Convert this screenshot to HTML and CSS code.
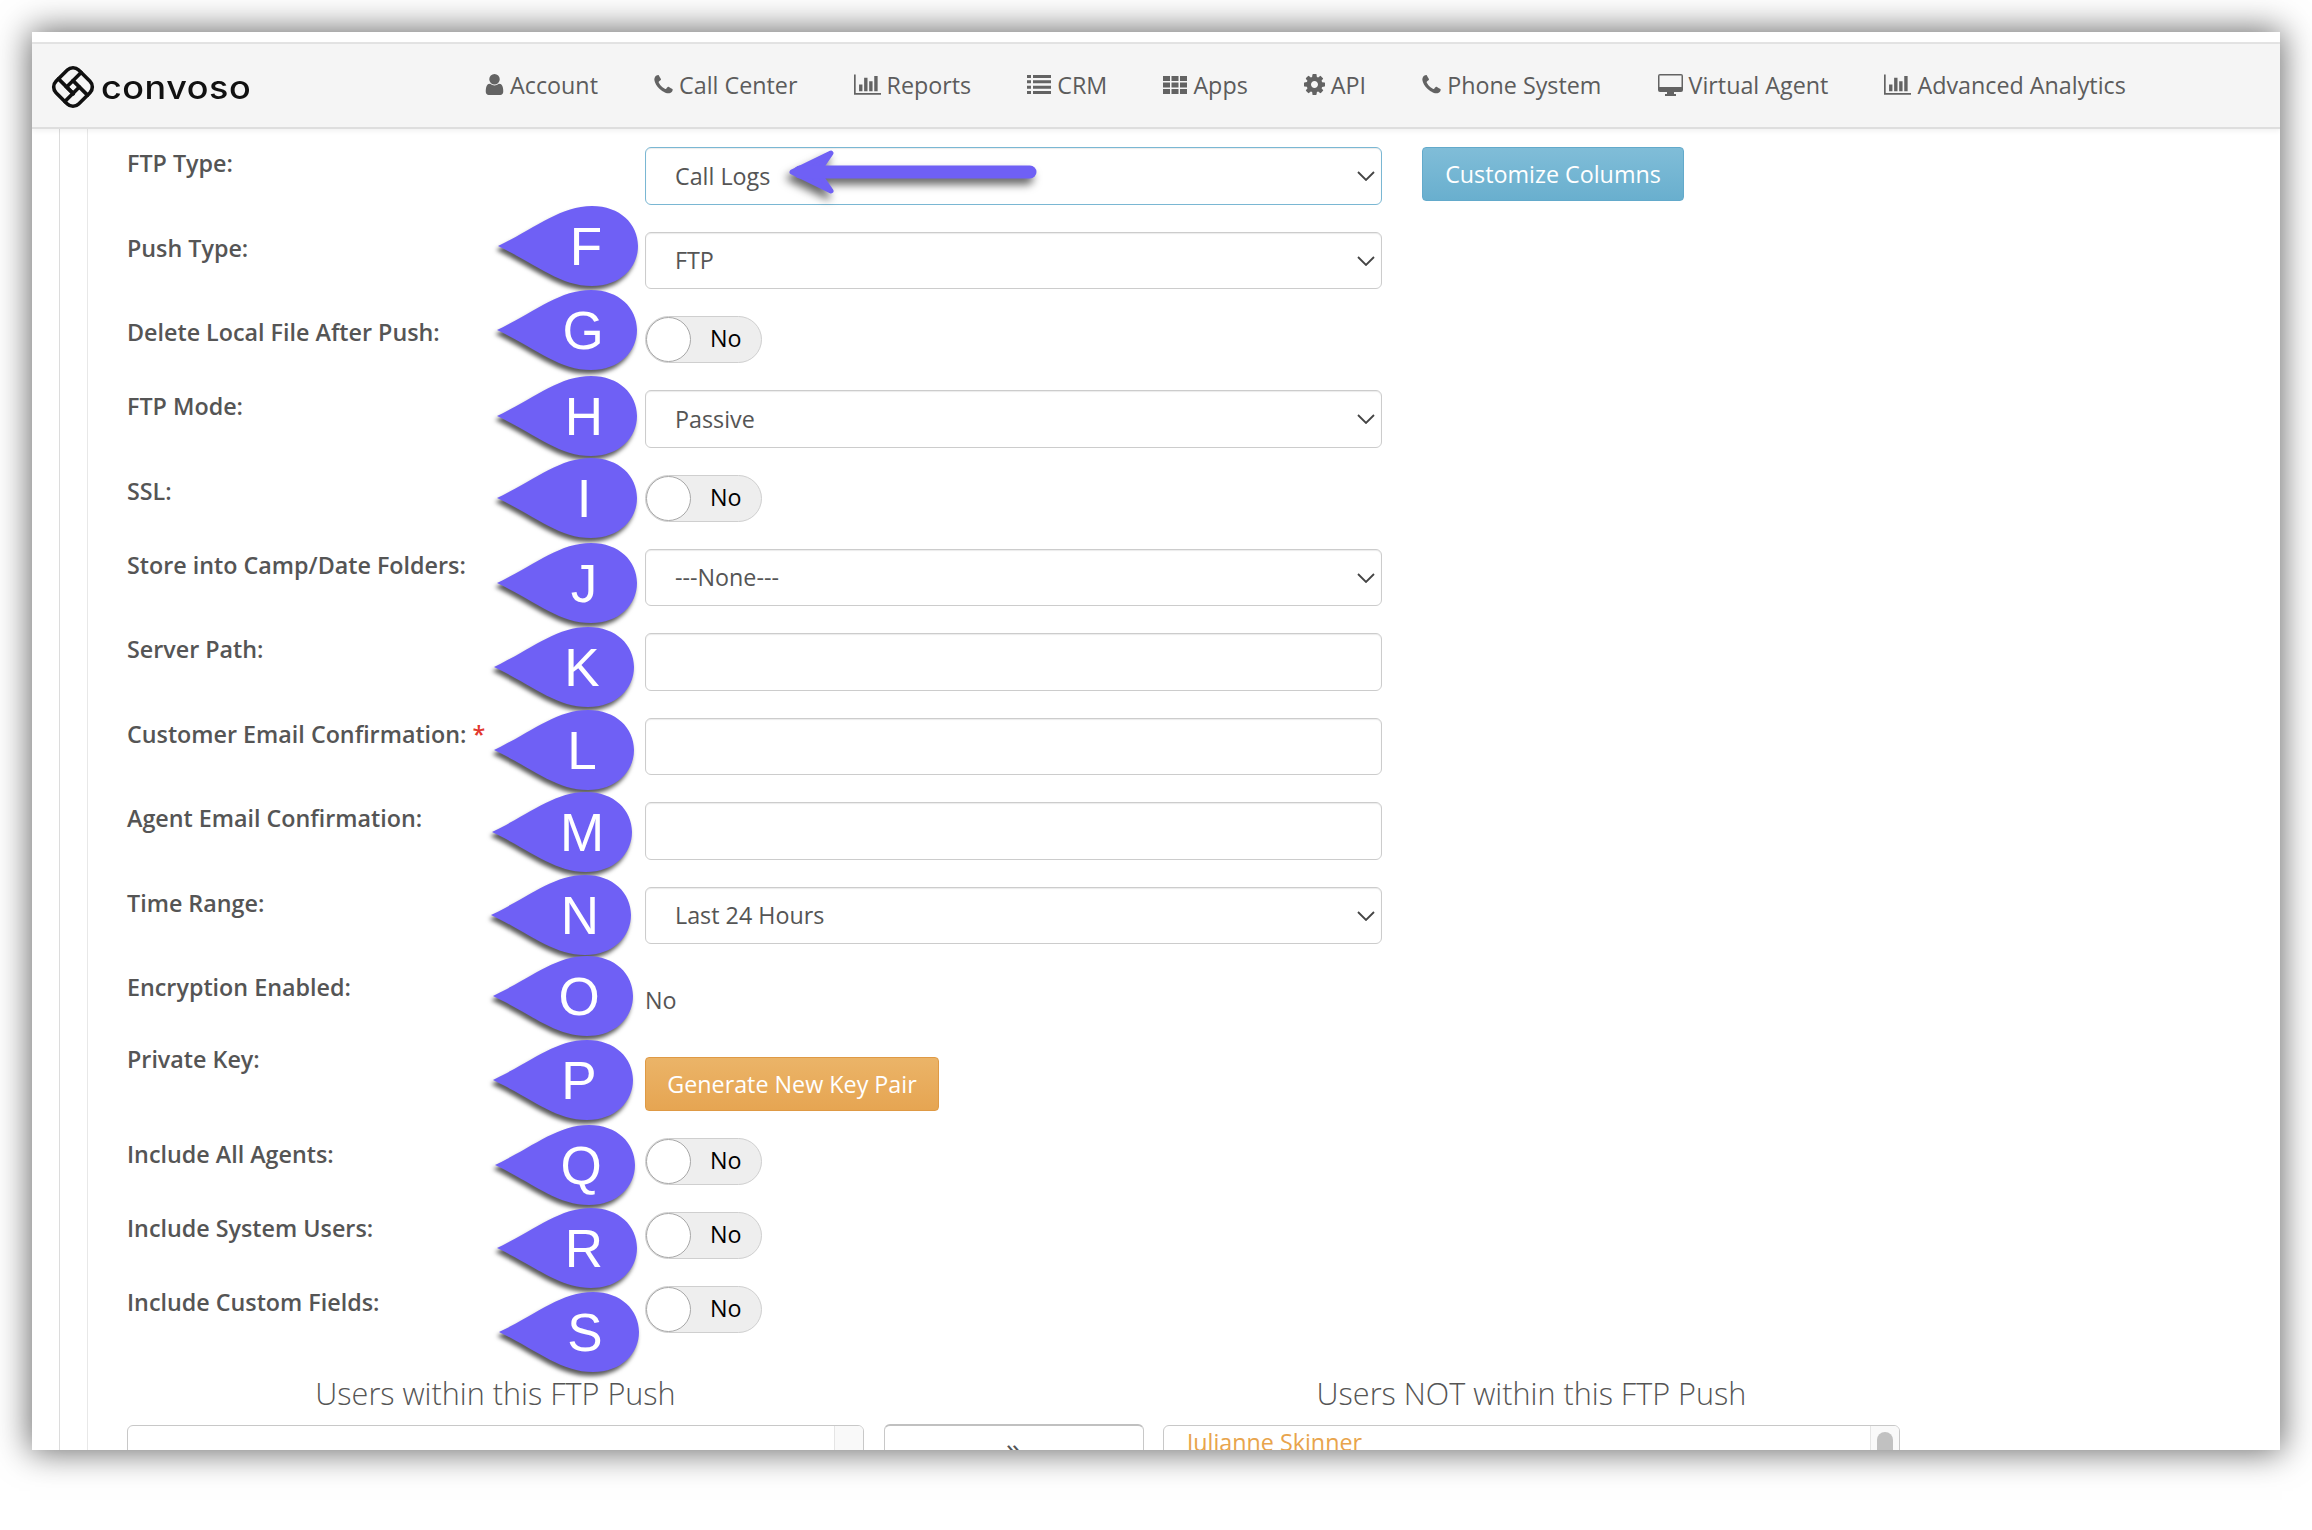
FILE: index.html
```html
<!DOCTYPE html>
<html lang="en">
<head>
<meta charset="utf-8">
<title>Convoso FTP Push</title>
<link rel="stylesheet" href="styles.css">
</head>
<body>
<div class="window">
  <div class="strip"></div>
  <header class="topbar">
    <div class="logo">
      <svg class="logo-mark" viewBox="0 0 44 44"><g transform="rotate(45 22 22)" fill="none" stroke="#111" stroke-width="3.600" stroke-linecap="round"><rect x="6" y="6" width="32" height="32" rx="8"/><path d="M17.500 6V26.500H27"/><path d="M38 17.500H17.500"/><path d="M26.500 38V17.500"/><path d="M6 26.500H26.500"/></g></svg>
      <span class="logo-text">convoso</span>
    </div>
    <nav class="nav">
      <a class="nav-item"><svg class="ic ic-user" viewBox="256 128 1280 1536"><path d="M1536 1399q0 109-62.5 187t-150.5 78h-854q-88 0-150.5-78t-62.5-187q0-85 8.5-160.5t31.5-152 58.5-131 94-89 134.5-34.5q131 128 313 128t313-128q76 0 134.5 34.5t94 89 58.5 131 31.5 152 8.5 160.5zm-256-887q0 159-112.5 271.5t-271.5 112.5-271.5-112.5-112.5-271.5 112.5-271.5 271.5-112.5 271.5 112.5 112.5 271.5z"/></svg>Account</a>
      <a class="nav-item"><svg class="ic ic-phone" viewBox="192 128 1408 1536"><path d="M1600 1240q0 27-10 70.5t-21 68.5q-21 50-122 106-94 51-186 51-27 0-53-3.5t-57.5-12.5-47-14.5-55.5-20.5-49-18q-98-35-175-83-127-79-264-216t-216-264q-48-77-83-175-3-9-18-49t-20.5-55.5-14.5-47-12.5-57.5-3.5-53q0-92 51-186 56-101 106-122 25-11 68.5-21t70.5-10q14 0 21 3 18 6 53 76 11 19 30 54t35 63.5 31 53.5q3 4 17.5 25t21.5 35.5 7 28.5q0 20-28.5 50t-62 55-62 53-28.5 46q0 9 5 22.5t8.5 20.5 14 24 11.5 19q76 137 174 235t235 174q2 1 19 11.5t24 14 20.5 8.5 22.5 5q18 0 46-28.5t53-62 55-62 50-28.5q14 0 28.5 7t35.5 21.5 25 17.5q25 15 53.5 31t63.5 35 54 30q70 35 76 53 3 7 3 21z"/></svg>Call Center</a>
      <a class="nav-item"><svg class="ic ic-chart" viewBox="0 128 2048 1536"><path d="M640 896v512h-256v-512h256zm384-512v1024h-256v-1024h256zm1024 1152v128h-2048v-1536h128v1408h1920zm-640-896v768h-256v-768h256zm384-384v1152h-256v-1152h256z"/></svg>Reports</a>
      <a class="nav-item"><svg class="ic ic-list" viewBox="0 0 24 19"><path d="M0 0h4v3H0zM6 0h18v3H6zM0 5.300h4v3H0zM6 5.300h18v3H6zM0 10.700h4v3H0zM6 10.700h18v3H6zM0 16h4v3H0zM6 16h18v3H6z"/></svg>CRM</a>
      <a class="nav-item"><svg class="ic ic-grid" viewBox="0 0 24 18"><path d="M0 0h7v5H0zM8.500 0h7v5h-7zM17 0h7v5h-7zM0 6.500h7v5H0zM8.500 6.500h7v5h-7zM17 6.500h7v5h-7zM0 13h7v5H0zM8.500 13h7v5h-7zM17 13h7v5h-7z"/></svg>Apps</a>
      <a class="nav-item"><svg class="ic ic-cog" viewBox="128 128 1536 1536"><path d="M1152 896q0-106-75-181t-181-75-181 75-75 181 75 181 181 75 181-75 75-181zm512-109v222q0 12-8 23t-20 13l-185 28q-19 54-39 91 35 50 107 138 10 12 10 25t-9 23q-27 37-99 108t-94 71q-12 0-26-9l-138-108q-44 23-91 38-16 136-29 186-7 28-36 28h-222q-14 0-24.500-8.500t-11.500-21.500l-28-184q-49-16-90-37l-141 107q-10 9-25 9-14 0-25-11-126-114-165-168-7-10-7-23 0-12 8-23 15-21 51-66.500t54-70.500q-27-50-41-99l-183-27q-13-2-21-12.500t-8-23.500v-222q0-12 8-23t19-13l186-28q14-46 39-92-40-57-107-138-10-12-10-24 0-10 9-23 26-36 98.500-107.500t94.500-71.500q13 0 26 10l138 107q44-23 91-38 16-136 29-186 7-28 36-28h222q14 0 24.500 8.500t11.500 21.500l28 184q49 16 90 37l142-107q9-9 24-9 13 0 25 10 129 119 165 170 7 8 7 22 0 12-8 23-15 21-51 66.500t-54 70.500q26 50 41 98l183 28q13 2 21 12.500t8 23.500z"/></svg>API</a>
      <a class="nav-item"><svg class="ic ic-phone" viewBox="192 128 1408 1536"><path d="M1600 1240q0 27-10 70.5t-21 68.5q-21 50-122 106-94 51-186 51-27 0-53-3.5t-57.5-12.5-47-14.5-55.5-20.5-49-18q-98-35-175-83-127-79-264-216t-216-264q-48-77-83-175-3-9-18-49t-20.5-55.5-14.5-47-12.5-57.5-3.5-53q0-92 51-186 56-101 106-122 25-11 68.5-21t70.5-10q14 0 21 3 18 6 53 76 11 19 30 54t35 63.5 31 53.5q3 4 17.5 25t21.5 35.5 7 28.5q0 20-28.5 50t-62 55-62 53-28.5 46q0 9 5 22.5t8.5 20.5 14 24 11.5 19q76 137 174 235t235 174q2 1 19 11.5t24 14 20.5 8.5 22.5 5q18 0 46-28.5t53-62 55-62 50-28.5q14 0 28.5 7t35.5 21.5 25 17.5q25 15 53.5 31t63.5 35 54 30q70 35 76 53 3 7 3 21z"/></svg>Phone System</a>
      <a class="nav-item"><svg class="ic ic-desktop" viewBox="0 0 25 22"><path fill-rule="evenodd" d="M2 0h21a2 2 0 0 1 2 2v14a2 2 0 0 1-2 2h-7v2h2v2H7v-2h2v-2H2a2 2 0 0 1-2-2V2a2 2 0 0 1 2-2zM1.500 1.500V13h22V1.500z"/></svg>Virtual Agent</a>
      <a class="nav-item"><svg class="ic ic-chart" viewBox="0 128 2048 1536"><path d="M640 896v512h-256v-512h256zm384-512v1024h-256v-1024h256zm1024 1152v128h-2048v-1536h128v1408h1920zm-640-896v768h-256v-768h256zm384-384v1152h-256v-1152h256z"/></svg>Advanced Analytics</a>
    </nav>
  </header>
  <div class="rail-outer">
    <div class="rail-inner">
      <form class="form">
        <div class="row row-tall">
          <label class="label">FTP Type:</label>
          <select class="select select-active"><option>Call Logs</option></select>
          <button type="button" class="btn btn-info">Customize Columns</button>
        </div>
        <div class="row row-tall">
          <label class="label">Push Type:</label>
          <select class="select"><option>FTP</option></select>
        </div>
        <div class="row row-toggle">
          <label class="label">Delete Local File After Push:</label>
          <div class="toggle"><span class="knob"></span><span class="toggle-text">No</span></div>
        </div>
        <div class="row row-tall">
          <label class="label">FTP Mode:</label>
          <select class="select"><option>Passive</option></select>
        </div>
        <div class="row row-toggle">
          <label class="label">SSL:</label>
          <div class="toggle"><span class="knob"></span><span class="toggle-text">No</span></div>
        </div>
        <div class="row row-tall">
          <label class="label">Store into Camp/Date Folders:</label>
          <select class="select"><option>---None---</option></select>
        </div>
        <div class="row row-tall">
          <label class="label">Server Path:</label>
          <input class="input" type="text">
        </div>
        <div class="row row-tall">
          <label class="label">Customer Email Confirmation: <span class="req">*</span></label>
          <input class="input" type="text">
        </div>
        <div class="row row-tall">
          <label class="label">Agent Email Confirmation:</label>
          <input class="input" type="text">
        </div>
        <div class="row row-tall">
          <label class="label">Time Range:</label>
          <select class="select"><option>Last 24 Hours</option></select>
        </div>
        <div class="row row-static">
          <label class="label">Encryption Enabled:</label>
          <div class="static">No</div>
        </div>
        <div class="row row-key">
          <label class="label">Private Key:</label>
          <button type="button" class="btn btn-warn">Generate New Key Pair</button>
        </div>
        <div class="row row-toggle">
          <label class="label">Include All Agents:</label>
          <div class="toggle"><span class="knob"></span><span class="toggle-text">No</span></div>
        </div>
        <div class="row row-toggle">
          <label class="label">Include System Users:</label>
          <div class="toggle"><span class="knob"></span><span class="toggle-text">No</span></div>
        </div>
        <div class="row row-toggle">
          <label class="label">Include Custom Fields:</label>
          <div class="toggle"><span class="knob"></span><span class="toggle-text">No</span></div>
        </div>
        <div class="users">
          <h3 class="users-title">Users within this FTP Push</h3>
          <div></div>
          <h3 class="users-title">Users NOT within this FTP Push</h3>
          <div class="list">
            <div class="list-body"></div>
            <div class="track"></div>
          </div>
          <div class="mover">»</div>
          <div class="list">
            <div class="list-body list-name">Julianne Skinner</div>
            <div class="track"><span class="thumb"></span></div>
          </div>
        </div>
      </form>
    </div>
  </div>
</div>

<svg class="overlay" viewBox="0 0 2312 1530" aria-hidden="true">
  <defs>
    <path id="drop" d="M0 40C38 22 62 0 94 0C122 0 140 18 140 40C140 62 122 80 94 80C62 80 38 58 0 40Z"/>
  </defs>
  <g class="arrow">
    <path d="M792 172L831 153L818 172L831 191Z" stroke-width="5" stroke-linejoin="round"/>
    <path d="M800 172H1030" stroke-width="13" stroke-linecap="round" fill="none"/>
  </g>
  <g class="pin" transform="translate(498 206)"><use href="#drop"/></g><text class="pin-letter" x="586" y="265">F</text>
  <g class="pin" transform="translate(497 290)"><use href="#drop"/></g><text class="pin-letter" x="583" y="349">G</text>
  <g class="pin" transform="translate(497 376)"><use href="#drop"/></g><text class="pin-letter" x="584" y="435">H</text>
  <g class="pin" transform="translate(497 458)"><use href="#drop"/></g><text class="pin-letter" x="584" y="517">I</text>
  <g class="pin" transform="translate(497 543)"><use href="#drop"/></g><text class="pin-letter" x="584" y="602">J</text>
  <g class="pin" transform="translate(494 627)"><use href="#drop"/></g><text class="pin-letter" x="582" y="686">K</text>
  <g class="pin" transform="translate(494 710)"><use href="#drop"/></g><text class="pin-letter" x="582" y="769">L</text>
  <g class="pin" transform="translate(492 792)"><use href="#drop"/></g><text class="pin-letter" x="582" y="851">M</text>
  <g class="pin" transform="translate(491 875)"><use href="#drop"/></g><text class="pin-letter" x="580" y="934">N</text>
  <g class="pin" transform="translate(493 956)"><use href="#drop"/></g><text class="pin-letter" x="579" y="1015">O</text>
  <g class="pin" transform="translate(493 1040)"><use href="#drop"/></g><text class="pin-letter" x="579" y="1099">P</text>
  <g class="pin" transform="translate(495 1125)"><use href="#drop"/></g><text class="pin-letter" x="581" y="1184">Q</text>
  <g class="pin" transform="translate(497 1208)"><use href="#drop"/></g><text class="pin-letter" x="584" y="1267">R</text>
  <g class="pin" transform="translate(499 1292)"><use href="#drop"/></g><text class="pin-letter" x="585" y="1351">S</text>
</svg>
</body>
</html>
```
FILE: styles.css
```css
* { box-sizing: border-box; }

html, body { margin: 0; height: 100%; }

body {
  position: relative;
  width: 2312px;
  height: 1530px;
  overflow: hidden;
  background: #fff;
  font-family: "Open Sans", sans-serif;
  font-size: 23.3px;
  color: #555;
  padding: 32px;
}

.window {
  width: 2248px;
  height: 1418px;
  background: #fff;
  overflow: hidden;
  box-shadow: 0 0 32px 2px rgba(0, 0, 0, .6);
}

.strip {
  height: 12px;
  border-bottom: 2px solid #e4e4e4;
}

.topbar {
  display: flex;
  align-items: center;
  height: 85px;
  padding-left: 19px;
  padding-bottom: 2px;
  background: #f5f5f5;
  border-bottom: 2px solid #dedede;
  box-shadow: 0 2px 5px rgba(0, 0, 0, .06);
  position: relative;
}

.logo { display: flex; align-items: center; width: 198px; margin-top: 4px; }
.logo-mark { width: 44px; height: 44px; flex: none; }
.logo-text {
  margin-left: 6px;
  font-family: Inter, sans-serif;
  font-size: 33px;
  font-weight: 500;
  letter-spacing: .5px;
  color: #111;
  line-height: 44px;
  transform: scaleX(1.09);
  transform-origin: left center;
}

.nav { display: flex; align-items: center; gap: 56.1px; margin-left: 236px; }
.nav-item { display: flex; align-items: center; gap: 6px; color: #5c5c5c; line-height: 34px; white-space: nowrap; }

.ic { fill: #636363; flex: none; }
.ic-user { width: 19px; height: 21px; }
.ic-phone { width: 19px; height: 20px; }
.ic-chart { width: 27px; height: 21px; }
.ic-list { width: 24px; height: 19px; }
.ic-grid { width: 24px; height: 18px; }
.ic-cog { width: 21px; height: 21px; }
.ic-desktop { width: 25px; height: 22px; }

.rail-outer { margin-left: 27px; border-left: 1px solid #dcdcdc; }
.rail-inner { margin-left: 27px; border-left: 1px solid #e8e8e8; }

.form { padding: 18px 0 0 39px; }

.row { display: flex; align-items: flex-start; margin-bottom: 27px; }
.row-tall { height: 57.5px; }
.row-toggle { height: 47px; }
.row-static { height: 45px; }
.row-key { height: 68px; }

.label {
  flex: none;
  width: 518px;
  font-weight: 600;
  line-height: 32px;
  color: #555;
  white-space: nowrap;
}
.req { color: #e2382e; }

.select, .input {
  width: 737px;
  height: 100%;
  border: 1px solid #ccc;
  border-radius: 6px;
  background: #fff;
  box-shadow: inset 0 1px 1px rgba(0, 0, 0, .08);
  font: inherit;
  color: #555;
  padding: 0 0 0 29px;
  outline: none;
}
.select {
  appearance: none;
  -webkit-appearance: none;
  background-image: url("data:image/svg+xml,%3Csvg xmlns='http://www.w3.org/2000/svg' width='18' height='10'%3E%3Cpath d='M1 1l8 8 8-8' fill='none' stroke='%23444' stroke-width='1.800'/%3E%3C/svg%3E");
  background-repeat: no-repeat;
  background-position: right 6px top 23px;
}
.select-active { border-color: #7ab7d3; }

.btn {
  font: inherit;
  color: #fff;
  height: 54px;
  border-radius: 4px;
  padding: 0 21px;
  white-space: nowrap;
}
.btn-info {
  width: 262px;
  margin-left: 40px;
  background: linear-gradient(#80bdd8, #69afce);
  border: 1px solid #63aacb;
}
.btn-warn {
  width: 294px;
  margin-top: 14px;
  background: linear-gradient(#ebb468, #e6a552);
  border: 1px solid #df9a45;
}

.toggle {
  position: relative;
  display: flex;
  align-items: center;
  width: 117px;
  height: 47px;
  padding-left: 64px;
  border: 1px solid #cfcfcf;
  border-radius: 24px;
  background: #eee;
}
.knob {
  position: absolute;
  left: 0;
  top: 0;
  width: 45px;
  height: 45px;
  border-radius: 50%;
  background: #fff;
  border: 1px solid #a8a8a8;
}
.toggle-text { color: #000; line-height: 34px; margin-top: -3px; }

.static { padding-top: 14px; line-height: 31px; }

.users {
  display: grid;
  grid-template-columns: 737px 260px 737px;
  column-gap: 19.5px;
  margin-top: 38px;
}
.users-title {
  margin: 0 0 10px;
  font-size: 30.6px;
  font-weight: 300;
  line-height: 44px;
  text-align: center;
  color: #555;
}

.list {
  display: flex;
  height: 260px;
  border: 1px solid #c8c8c8;
  border-radius: 6px;
  overflow: hidden;
}
.list-body { flex: 1; padding-left: 23px; line-height: 32px; }
.list-name { color: #e8a44c; }
.track {
  flex: none;
  width: 29px;
  background: #f9f9f9;
  border-left: 1px solid #e5e5e5;
  padding: 6px 6px 0 6px;
}
.thumb {
  display: block;
  width: 16px;
  height: 120px;
  border-radius: 8px;
  background: #c1c1c1;
}

.mover {
  height: 260px;
  margin-top: -1px;
  border: 1px solid #c8c8c8;
  border-top: 2px solid #c0c0c0;
  border-radius: 6px;
  text-align: center;
  line-height: 44px;
  font-size: 30px;
}

.overlay {
  position: absolute;
  left: 0;
  top: 0;
  width: 2312px;
  height: 1530px;
  pointer-events: none;
}
.arrow {
  fill: #6f60f5;
  stroke: #6f60f5;
  filter: drop-shadow(-3px 6px 4px rgba(0, 0, 0, .6));
}
.pin {
  fill: #6f60f5;
  filter: drop-shadow(-2px 4px 2px rgba(0, 0, 0, .65));
}
.pin-letter {
  font-family: "Liberation Sans", Arial, sans-serif;
  font-size: 53px;
  fill: #fff;
  text-anchor: middle;
}
```
